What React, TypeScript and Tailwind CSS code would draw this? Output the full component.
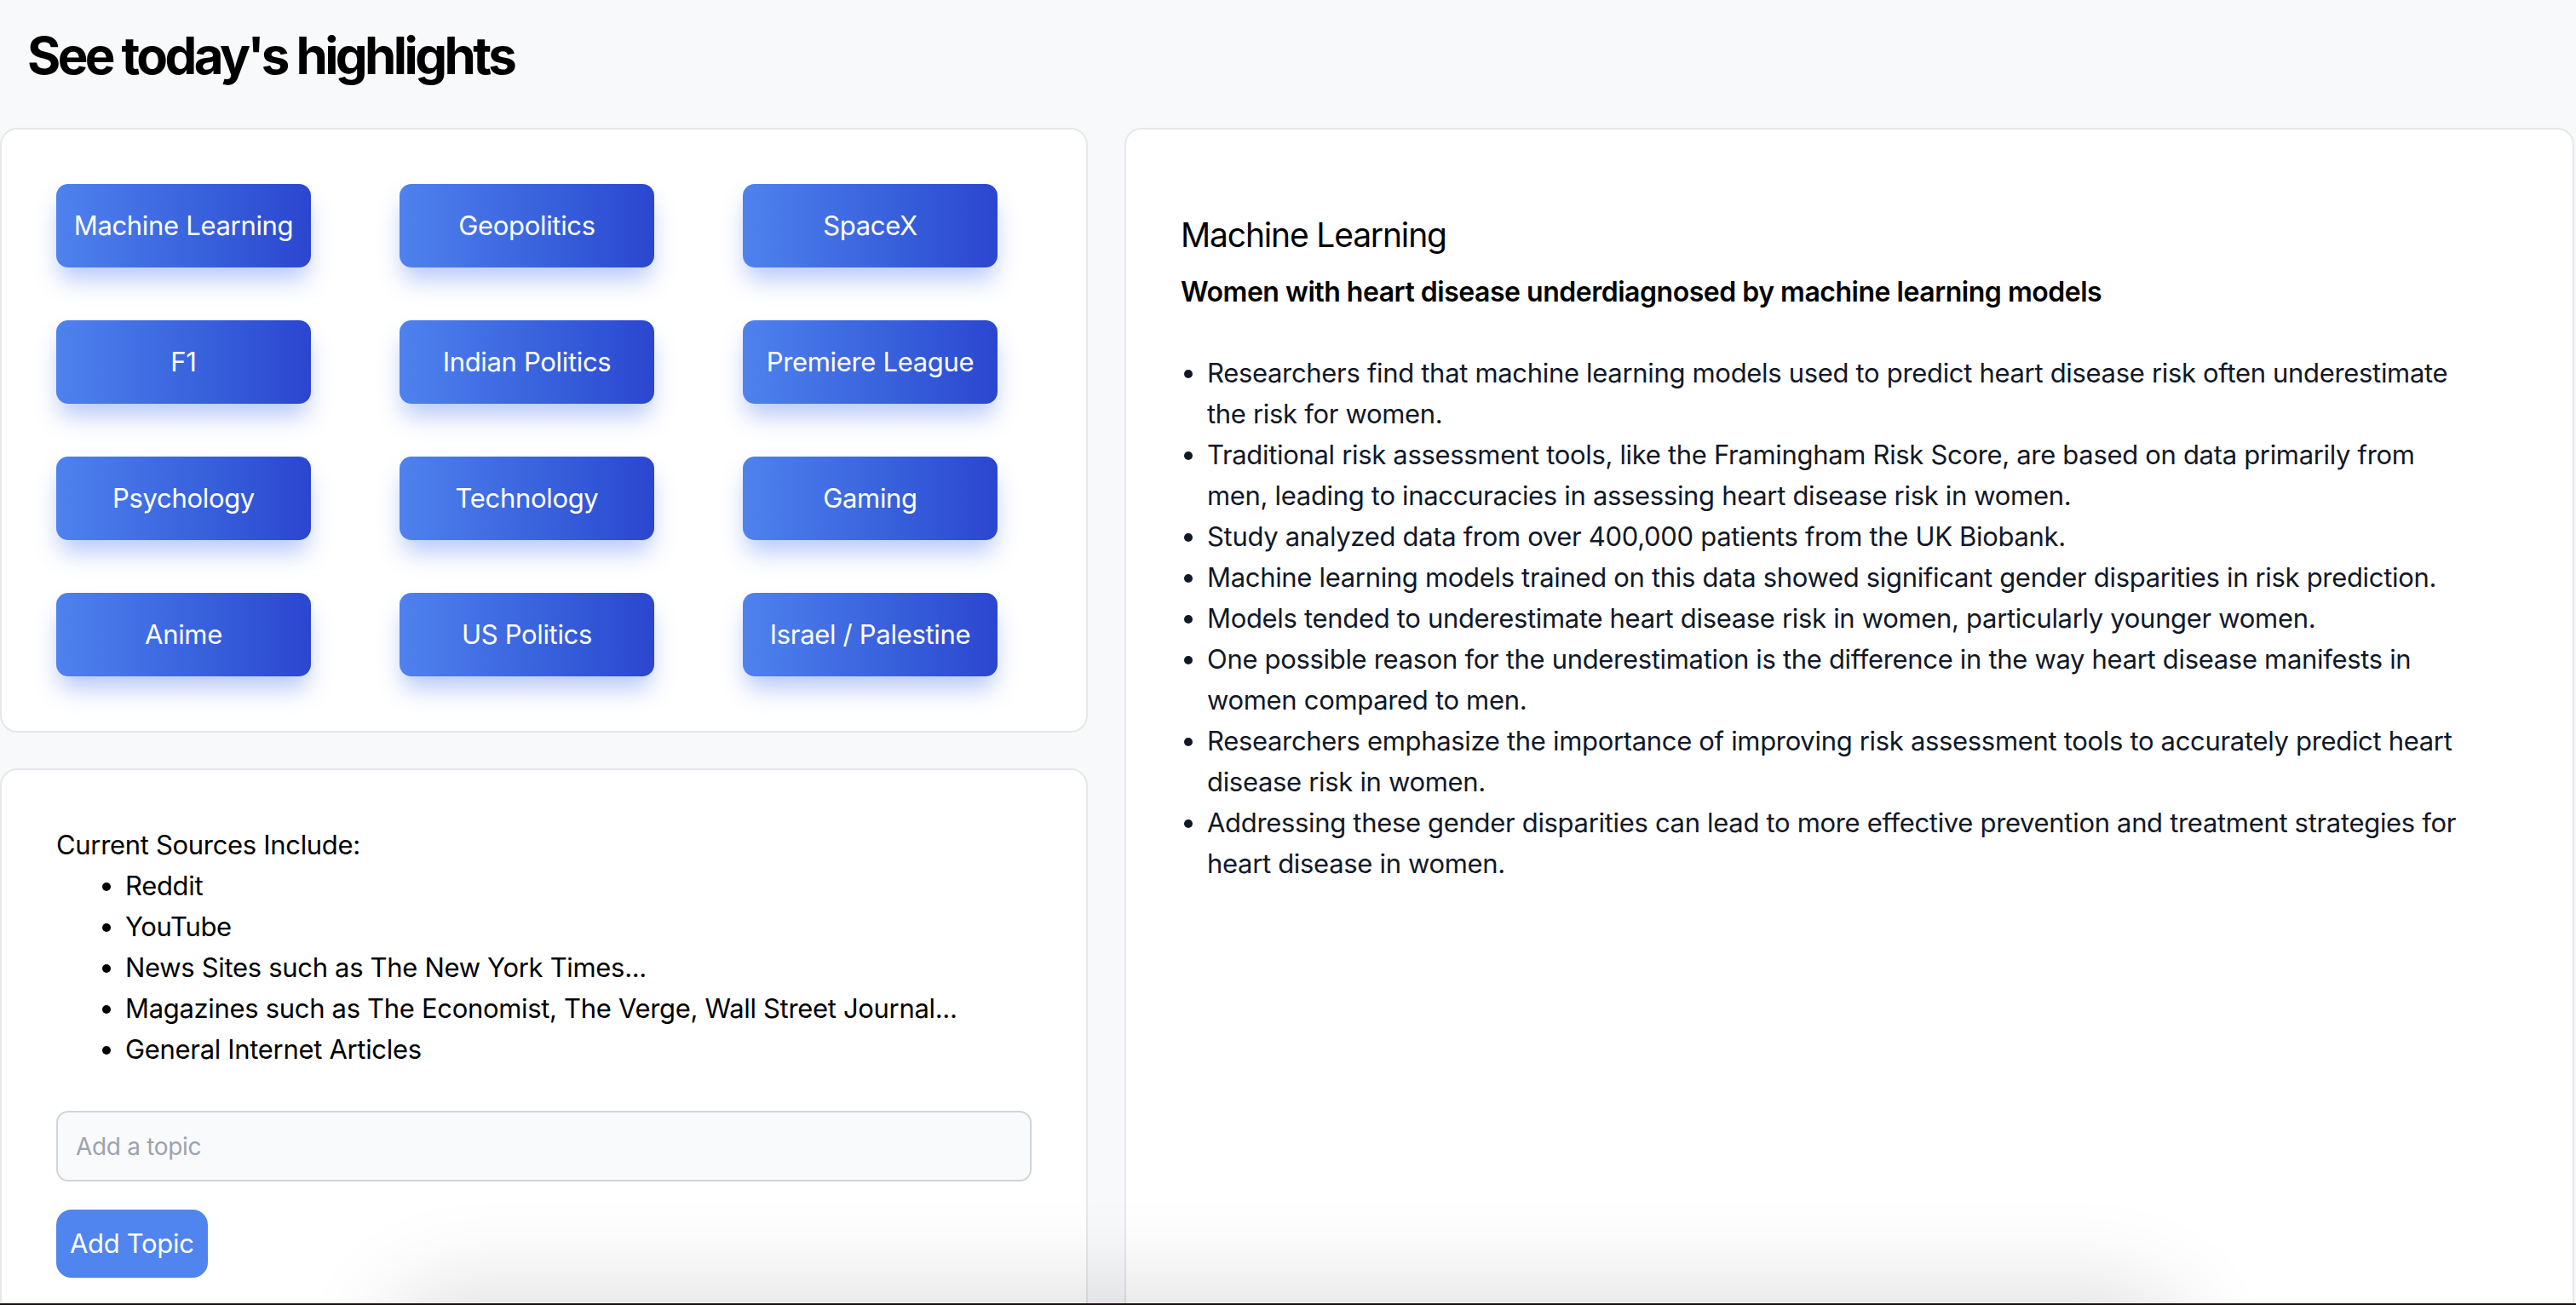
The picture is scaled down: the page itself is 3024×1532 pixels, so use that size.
import React, { useState } from 'react';

const topics = [
    'Machine Learning', 'Geopolitics', 'SpaceX',
    'F1', 'Indian Politics', 'Premiere League',
    'Psychology', 'Technology', 'Gaming',
    'Anime', 'US Politics', 'Israel / Palestine',
];

const sources = [
    'Reddit',
    'YouTube',
    'News Sites such as The New York Times...',
    'Magazines such as The Economist, The Verge, Wall Street Journal...',
    'General Internet Articles',
];

const points = [
    'Researchers find that machine learning models used to predict heart disease risk often underestimate the risk for women.',
    'Traditional risk assessment tools, like the Framingham Risk Score, are based on data primarily from men, leading to inaccuracies in assessing heart disease risk in women.',
    'Study analyzed data from over 400,000 patients from the UK Biobank.',
    'Machine learning models trained on this data showed significant gender disparities in risk prediction.',
    'Models tended to underestimate heart disease risk in women, particularly younger women.',
    'One possible reason for the underestimation is the difference in the way heart disease manifests in women compared to men.',
    'Researchers emphasize the importance of improving risk assessment tools to accurately predict heart disease risk in women.',
    'Addressing these gender disparities can lead to more effective prevention and treatment strategies for heart disease in women.',
];

export default function App() {
    const [active, setActive] = useState('Machine Learning');
    const [topic, setTopic] = useState('');

    return (
        <div className="relative h-screen overflow-hidden bg-[#f8f9fb] font-['Inter',sans-serif] text-black tracking-[-0.02em]">
            <h1 className="px-[32px] pt-[29px] text-[60px] leading-[72px] font-bold tracking-[-0.06em]">
                See today's highlights
            </h1>

            <div className="mt-[49px] grid grid-cols-[1277px_1fr] gap-[43px] pr-[2px]">
                {/* LEFT COLUMN */}
                <div className="flex flex-col gap-[42px]">
                    <div className="rounded-[20px] border-2 border-[#e5e7eb] bg-white p-[64px]">
                        <div className="grid grid-cols-[299px_299px_299px] gap-x-[104px] gap-y-[62px]">
                            {topics.map((t) => (
                                <button
                                    key={t}
                                    onClick={() => setActive(t)}
                                    className="flex h-[98px] w-[299px] items-center justify-center rounded-[14px] bg-gradient-to-r from-[#4f82ee] to-[#2b46cf] text-[31px] leading-[48px] text-white shadow-[0_18px_28px_-4px_rgba(66,110,240,0.38)]"
                                >
                                    {t}
                                </button>
                            ))}
                        </div>
                    </div>

                    <div className="rounded-[20px] border-2 border-[#e5e7eb] bg-white p-[64px]">
                        <p className="text-[31px] leading-[48px]">Current Sources Include:</p>
                        <ul className="list-disc pl-[81px] text-[31px] leading-[48px]">
                            {sources.map((s) => (
                                <li key={s}>{s}</li>
                            ))}
                        </ul>
                        <input
                            value={topic}
                            onChange={(e) => setTopic(e.target.value)}
                            placeholder="Add a topic"
                            className="mt-[48px] block h-[83px] w-full rounded-[14px] border-2 border-[#d1d5db] bg-[#f9fafb] px-[21px] text-[28px] placeholder:text-[#9ca3af] outline-none"
                        />
                        <button className="mt-[33px] h-[80px] rounded-[18px] bg-[#5084ee] px-[16px] text-[31px] leading-[48px] text-white">
                            Add Topic
                        </button>
                    </div>
                </div>

                {/* RIGHT PANEL */}
                <div className="rounded-[20px] border-2 border-[#e5e7eb] bg-white p-[64px]">
                    <div className="max-w-[1524px]">
                        <h2 className="mt-[32px] text-[39px] leading-[56px] tracking-[-0.03em]">{active}</h2>
                        <h3 className="mt-[15px] text-[32px] leading-[48px] font-semibold tracking-[-0.015em]">
                            Women with heart disease underdiagnosed by machine learning models
                        </h3>
                        <ul className="mt-[47px] list-disc pl-[31px] text-[31px] leading-[48px] text-[#111827]">
                            {points.map((p) => (
                                <li key={p}>{p}</li>
                            ))}
                        </ul>
                    </div>
                </div>
            </div>

            {/* shadow of element just below the fold */}
            <div className="pointer-events-none absolute left-[480px] top-[1540px] h-[300px] w-[2060px] rounded-[60px] bg-white shadow-[0_0_110px_30px_rgba(0,0,0,0.13)]" />
            <div className="absolute bottom-0 left-0 h-[2px] w-full bg-[#1c1010]" />
        </div>
    );
}
